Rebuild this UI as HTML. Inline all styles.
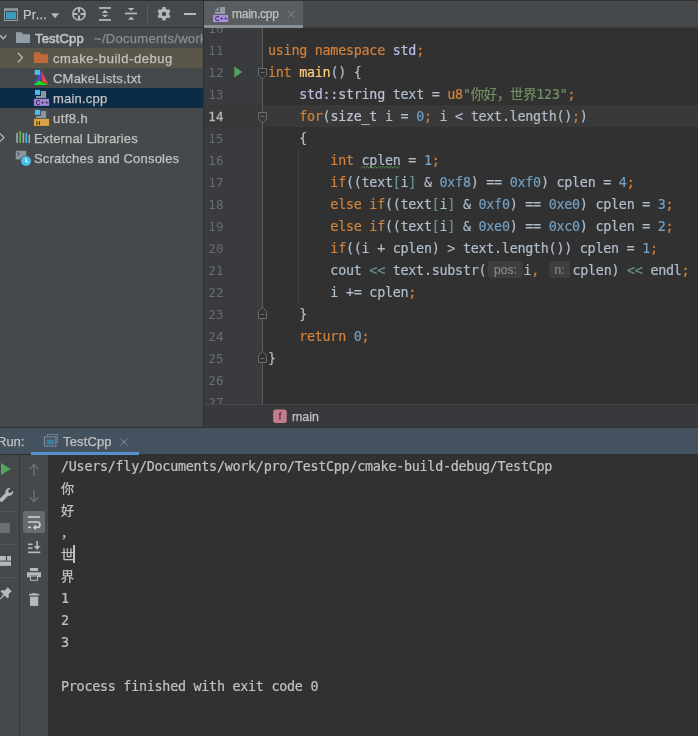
<!DOCTYPE html>
<html lang="en">
<head>
<meta charset="utf-8">
<title>TestCpp - main.cpp</title>
<style>
*{box-sizing:border-box;margin:0;padding:0}
html,body{width:698px;height:736px;overflow:hidden;background:#313131}
body{position:relative;font-family:"Liberation Sans","Noto Sans CJK SC",sans-serif;font-size:13px;color:#c1c1c1}
.abs{position:absolute}
.cl,.ln,#console div,#proj .row span,span.abs{will-change:transform}
#proj .row span,span.abs{-webkit-text-stroke:0.25px currentColor}
.cl,#console div{-webkit-text-stroke:0.2px currentColor}
/* project panel */
#proj{left:0;top:0;width:203px;height:428px;background:#45494b;overflow:hidden}
#proj .row{position:absolute;left:0;width:203px;height:20px;line-height:20px;white-space:nowrap}
#proj .row span{position:absolute;top:1px;margin-left:0.6px}
.gray{color:#8e8e8e}
/* editor */
#tabs{left:204px;top:0;width:494px;height:28px;background:#45494b;border-bottom:1px solid #3d4042}
#tab{left:0;top:1px;width:99px;height:27px;background:#585d60}
#tab .ul{left:0;top:24px;width:99px;height:3px;background:#8a9097}
#topline{left:0;top:0;width:698px;height:1px;background:#2f3032}
#vsep{left:203px;top:0;width:1px;height:428px;background:#2f3032}
#gutter{left:204px;top:28px;width:58px;height:376px;background:#393b3e}
#code{left:204px;top:28px;width:494px;height:376px;overflow:hidden;font-family:"DejaVu Sans Mono","Liberation Mono","Noto Sans CJK SC",monospace;font-size:13.4px;color:#b0bdcb}
.ln{position:absolute;left:0;width:20px;text-align:right;height:22px;line-height:22px;margin-top:1px;color:#6a6d70;font-family:"DejaVu Sans Mono","Liberation Mono",monospace;font-size:12.500px;letter-spacing:0.400px}
.cl{position:absolute;left:64.1px;margin-top:1px;height:22px;line-height:22px;white-space:pre;letter-spacing:-0.267px}
.k{color:#d1813b}.n{color:#729fc1}.s{color:#749063}.f{color:#ffcb77}.ns{color:#bbbce6}.t{color:#bfc2d5}.o{color:#699593}
.typo{}
.hint{display:inline-block;font-family:"Liberation Sans",sans-serif;font-size:12px;letter-spacing:0;color:#868686;background:#3e3e3e;border-radius:3px;height:17px;line-height:19px;text-align:center;vertical-align:0.800px}
#crumbs{left:204px;top:404px;width:494px;height:24px;background:#38393c;border-top:1px solid #47494b;border-bottom:1px solid #2f3032}
/* run */
#runhdr{left:0;top:428px;width:698px;height:27px;background:#44515f;border-bottom:1px solid #2f3032}
#runleft{left:0;top:455px;width:48px;height:281px;background:#45494b}
#console{left:48px;top:455px;width:650px;height:281px;background:#313131;font-family:"DejaVu Sans Mono","Liberation Mono","Noto Sans CJK SC",monospace;font-size:13.400px;color:#c1c1c1}
#console div{position:absolute;left:12.900px;margin-top:1px;height:22px;line-height:22px;white-space:pre;letter-spacing:-0.267px}
#console div.cj{font-size:13px;margin-left:0.300px;margin-top:0.500px;-webkit-text-stroke:0.250px currentColor}
#icons{position:absolute;left:0;top:0;width:698px;height:736px;pointer-events:none}
#icons text{font-family:"Liberation Sans",sans-serif}
</style>
</head>
<body>
<!-- PROJECT PANEL -->
<div id="proj" class="abs">
  <div class="row" style="top:4px"><span style="left:22.200px;letter-spacing:0.2px">Pr...</span></div>
  <div class="abs" style="left:0;top:27px;width:203px;height:1px;background:#2f3032"></div>
  <div class="row" style="top:28px"><span style="left:34px;-webkit-text-stroke:0.6px currentColor;letter-spacing:0.17px">TestCpp</span><span class="gray" style="left:93px;letter-spacing:0.3px">~/Documents/work/pro/TestCpp</span></div>
  <div class="row" style="top:48px;background:#5b564a"><span style="left:52px;letter-spacing:0.54px">cmake-build-debug</span></div>
  <div class="row" style="top:68px"><span style="left:52px;letter-spacing:0.21px">CMakeLists.txt</span></div>
  <div class="row" style="top:88px;background:#0a2c46"><span style="left:52px;letter-spacing:0.2px">main.cpp</span></div>
  <div class="row" style="top:108px"><span style="left:52px;letter-spacing:0.43px">utf8.h</span></div>
  <div class="row" style="top:128px"><span style="left:33px;letter-spacing:0.150px">External Libraries</span></div>
  <div class="row" style="top:148px"><span style="left:33.500px;letter-spacing:0.200px">Scratches and Consoles</span></div>
</div>
<div id="vsep" class="abs"></div>

<!-- EDITOR TABS -->
<div id="tabs" class="abs">
  <div id="tab" class="abs"><span class="abs" style="left:27.7px;top:5px;line-height:16px;font-size:12px;letter-spacing:-0.25px;color:#c1c1c1">main.cpp</span><div class="ul abs"></div></div>
</div>
<div id="topline" class="abs"></div>

<!-- EDITOR -->
<div id="gutter" class="abs"></div>
<div id="code" class="abs">
  <div class="abs" style="left:0;top:77px;width:494px;height:22px;background:#393939"></div>
  <div class="abs" style="left:58px;top:0;width:1px;height:376px;background:#5c5c5c"></div>
  <div class="abs" style="left:93.5px;top:121px;width:1px;height:154px;background:#414141"></div>
  <div class="ln" style="top:-11px">10</div>
  <div class="ln" style="top:11px">11</div>
  <div class="ln" style="top:33px">12</div>
  <div class="ln" style="top:55px">13</div>
  <div class="ln" style="top:77px;color:#b5b5b5;-webkit-text-stroke:0.300px currentColor">14</div>
  <div class="ln" style="top:99px">15</div>
  <div class="ln" style="top:121px">16</div>
  <div class="ln" style="top:143px">17</div>
  <div class="ln" style="top:165px">18</div>
  <div class="ln" style="top:187px">19</div>
  <div class="ln" style="top:209px">20</div>
  <div class="ln" style="top:231px">21</div>
  <div class="ln" style="top:253px">22</div>
  <div class="ln" style="top:275px">23</div>
  <div class="ln" style="top:297px">24</div>
  <div class="ln" style="top:319px">25</div>
  <div class="ln" style="top:341px">26</div>
  <div class="ln" style="top:363px">27</div>

  <div class="cl" style="top:11px"><span class="k">using namespace</span> <span class="ns">std</span><span class="k">;</span></div>
  <div class="cl" style="top:33px"><span class="k">int</span> <span class="f">main</span>() {</div>
  <div class="cl" style="top:55px">    <span class="ns">std</span>::<span class="t">string</span> text = <span class="k">u8</span><span class="s">"你好，世界123"</span><span class="k">;</span></div>
  <div class="cl" style="top:77px">    <span class="k">for</span>(<span class="t">size_t</span> i = <span class="n">0</span><span class="k">;</span> i &lt; text.length()<span class="k">;</span>)</div>
  <div class="cl" style="top:99px">    {</div>
  <div class="cl" style="top:121px">        <span class="k">int</span> <span class="typo">cplen</span> = <span class="n">1</span><span class="k">;</span></div>
  <div class="cl" style="top:143px">        <span class="k">if</span>((text<span class="o">[</span>i<span class="o">]</span> &amp; <span class="n">0xf8</span>) == <span class="n">0xf0</span>) cplen = <span class="n">4</span><span class="k">;</span></div>
  <div class="cl" style="top:165px">        <span class="k">else if</span>((text<span class="o">[</span>i<span class="o">]</span> &amp; <span class="n">0xf0</span>) == <span class="n">0xe0</span>) cplen = <span class="n">3</span><span class="k">;</span></div>
  <div class="cl" style="top:187px">        <span class="k">else if</span>((text<span class="o">[</span>i<span class="o">]</span> &amp; <span class="n">0xe0</span>) == <span class="n">0xc0</span>) cplen = <span class="n">2</span><span class="k">;</span></div>
  <div class="cl" style="top:209px">        <span class="k">if</span>((i + cplen) &gt; text.length()) cplen = <span class="n">1</span><span class="k">;</span></div>
  <div class="cl" style="top:231px">        cout <span class="o">&lt;&lt;</span> text.substr(<span class="hint" style="width:34.300px;margin:0 0.900px 0 2px">pos:</span>i<span class="k">,</span> <span class="hint" style="width:21.500px;margin:0 2.100px 0 2px">n:</span>cplen) <span class="o">&lt;&lt;</span> endl<span class="k">;</span></div>
  <div class="cl" style="top:253px">        i += cplen<span class="k">;</span></div>
  <div class="cl" style="top:275px">    }</div>
  <div class="cl" style="top:297px">    <span class="k">return</span> <span class="n">0</span><span class="k">;</span></div>
  <div class="cl" style="top:319px">}</div>
</div>

<!-- BREADCRUMBS -->
<div id="crumbs" class="abs">
  <span class="abs" style="left:88px;top:3.800px;line-height:16px;font-size:12.400px;color:#c1c1c1">main</span>
</div>
<div class="abs" style="left:200px;top:404px;width:3px;height:24px;background:#45494b"></div>

<div class="abs" style="left:0;top:427px;width:698px;height:1px;background:#2f3032"></div>
<!-- RUN -->
<div id="runhdr" class="abs">
  <span class="abs" style="left:-3.5px;top:6px;line-height:16px">Run:</span>
  <span class="abs" style="left:63px;top:6px;line-height:16px;letter-spacing:0.150px">TestCpp</span>
  <div class="abs" style="left:31px;top:24px;width:108px;height:3px;background:#5491cc"></div>
</div>
<div id="runleft" class="abs">
  <div class="abs" style="left:19px;top:0;width:1px;height:281px;background:#35383a"></div>
  <div class="abs" style="left:0;top:56px;width:15px;height:1px;background:#555555"></div>
  <div class="abs" style="left:0;top:89px;width:15px;height:1px;background:#555555"></div>
  <div class="abs" style="left:0;top:122px;width:15px;height:1px;background:#555555"></div>
  <div class="abs" style="left:23px;top:56px;width:22px;height:22px;border-radius:3px;background:#666b6e"></div>
</div>
<div id="console" class="abs">
  <div style="top:0px">/Users/fly/Documents/work/pro/TestCpp/cmake-build-debug/TestCpp</div>
  <div style="top:22px" class="cj">你</div>
  <div style="top:44px" class="cj">好</div>
  <div style="top:66px" class="cj">，</div>
  <div style="top:88px" class="cj">世</div>
  <div style="top:110px" class="cj">界</div>
  <div style="top:132px">1</div>
  <div style="top:154px">2</div>
  <div style="top:176px">3</div>
  <div style="top:220px">Process finished with exit code 0</div>
  <div class="abs" style="left:25.3px;top:89.3px;width:2px;height:17.7px;background:#c1c1c1"></div>
</div>
<!-- ICONS (page coordinates) -->
<svg id="icons" width="698" height="736" viewBox="0 0 698 736">
  <!-- project toolbar -->
  <g id="ic-projview">
    <rect x="4.5" y="9.5" width="13" height="11" fill="none" stroke="#8d9aa3" stroke-width="1"/>
    <rect x="4" y="8.2" width="14" height="2.6" fill="#8d9aa3"/>
    <rect x="6" y="12" width="10" height="7.2" fill="#3e9ab8"/>
  </g>
  <path d="M51 13.2h8.2l-4.1 5z" fill="#b6b8b9"/>
  <g id="ic-locate" stroke="#b6b8b9" fill="none">
    <circle cx="79" cy="13.900" r="6.100" stroke-width="1.600"/>
    <path d="M79 8v4.300M79 15.500v4.300M73 13.900h4.400M80.600 13.900h4.400" stroke-width="2"/>
  </g>
  <g id="ic-expand" fill="#b6b8b9">
    <rect x="99" y="7.100" width="12" height="1.750"/>
    <rect x="99" y="19.100" width="12" height="1.750"/>
    <path d="M105 10.100l3.300 2.800h-6.600z"/>
    <path d="M105 17.600l3.300-2.800h-6.600z"/>
  </g>
  <g id="ic-collapse" fill="#b6b8b9">
    <rect x="125" y="12.600" width="12" height="1.700"/>
    <path d="M131.100 11.100l3.100-3.100h-6.200z"/>
    <path d="M131.100 16.600l3.100 3.100h-6.200z"/>
  </g>
  <rect x="147" y="4" width="1" height="19" fill="#5a5d5f"/>
  <g id="ic-gear" transform="translate(164 13.9)" fill="#b6b8b9">
    <path fill-rule="evenodd" d="M-1.4-6.8h2.8l.5 1.9 1.3.75 1.9-.55 1.4 2.4-1.4 1.4v1.5l1.4 1.4-1.4 2.4-1.9-.55-1.3.75-.5 1.9h-2.8l-.5-1.9-1.3-.75-1.9.55-1.4-2.4 1.4-1.4v-1.5l-1.4-1.4 1.4-2.4 1.9.55 1.3-.75zM0-2.2a2.2 2.2 0 1 0 0 4.4 2.2 2.2 0 0 0 0-4.400z"/>
  </g>
  <rect x="184" y="13" width="12" height="2" fill="#b6b8b9"/>

  <!-- tree -->
  <path d="M0 35.3l3.2 3.5 3.2-3.5" fill="none" stroke="#b6b8b9" stroke-width="1.3"/>
  <path d="M16 32.3h5.6l1.6 1.9H30V43H16z" fill="#919da6"/>
  <path d="M18 53l4.4 4.6-4.400 4.600" fill="none" stroke="#b6b8b9" stroke-width="1.3"/>
  <path d="M34 52.300h5.600l1.600 1.900H48V63H34z" fill="#c0693a"/>
  <g id="ic-cmake">
    <path d="M41.200 70.800L33.700 84.800L38.800 80.600L41.900 78.000z" fill="#4a4ad8"/>
    <path d="M41.300 70.800L48.300 84.600L42.000 81.200L41.800 75.000z" fill="#e8494d"/>
    <path d="M33.700 84.900H48.200L38.800 80.500z" fill="#18e018"/>
    <rect x="34.800" y="69.900" width="5.300" height="5" fill="#48bee8"/>
  </g>
  <g id="ic-cpp">
    <path d="M41 91h5.100v6.900H36v-1.800h5z" fill="#8796a0"/>
    <rect x="34.900" y="89.900" width="5.200" height="5" fill="#48bee8"/>
    <rect x="33.900" y="98.800" width="15.200" height="7.100" fill="#9c85d2"/>
    <text x="35.800" y="104.700" font-size="6.300" font-weight="bold" fill="#3c2850">C<tspan dx="0.500" dy="-0.500" font-size="6">+</tspan><tspan dx="0.500" font-size="6">+</tspan></text>
  </g>
  <g id="ic-h">
    <path d="M41 111h5.100v6.900H36v-1.800h5z" fill="#8796a0"/>
    <rect x="34.900" y="109.900" width="5.200" height="5" fill="#48bee8"/>
    <rect x="33.900" y="118.800" width="15.200" height="7.100" fill="#d9a343"/>
    <text x="35.900" y="124.800" font-size="6" font-weight="bold" fill="#3f2d0c">H</text>
  </g>
  <path d="M0 133.600l4 4-4 4" fill="none" stroke="#b6b8b9" stroke-width="1.300"/>
  <g id="ic-libs">
    <rect x="16.200" y="132.900" width="1.700" height="10" fill="#9aa7b0"/>
    <rect x="19.300" y="131" width="1.700" height="11.900" fill="#62b543"/>
    <rect x="22.500" y="132.900" width="1.700" height="10" fill="#9aa7b0"/>
    <rect x="25.400" y="132.900" width="1.700" height="10" fill="#40b6e0"/>
    <rect x="28.400" y="134.700" width="1.700" height="8.200" fill="#9aa7b0"/>
  </g>
  <g id="ic-scratch">
    <rect x="15.800" y="150.800" width="10.400" height="8.600" fill="#8d979e"/>
    <path d="M17.300 152.300l2.200 1.800-2.200 1.800" fill="none" stroke="#45494b" stroke-width="1"/>
    <circle cx="26" cy="161" r="5.600" fill="#45494b"/>
    <circle cx="26" cy="161" r="5" fill="#48bee8"/>
    <path d="M26 158v3.200l2 1.200" fill="none" stroke="#ffffff" stroke-width="1.100"/>
  </g>

  <!-- editor tab -->
  <g id="ic-tabcpp">
    <path d="M220 7.100h5.100v6.800H214.800v-2.200H220z" fill="#909da6"/>
    <path d="M218.700 7.100v3.300H214.800z" fill="#909da6"/>
    <rect x="213" y="15" width="15.100" height="7" fill="#a98fdc"/>
    <text x="214.900" y="20.900" font-size="6.300" font-weight="bold" fill="#3c2850">C<tspan dx="0.500" dy="-0.500" font-size="6">+</tspan><tspan dx="0.500" font-size="6">+</tspan></text>
  </g>
  <path d="M287.800 10.800l7 7M294.800 10.800l-7 7" stroke="#808487" stroke-width="1" fill="none"/>

  <!-- gutter -->
  <path d="M234.400 66.600l7.800 5.400-7.800 5.400z" fill="#53a45e"/>
  <g id="folds" fill="#313131" stroke="#6a6d70" stroke-width="1">
    <path d="M258.500 68.500h8v6.500l-4 4-4-4z"/>
    <path d="M260.500 72.500h4"/>
    <path d="M258.500 112.500h8v6.500l-4 4-4-4z" fill="#393939"/>
    <path d="M260.500 116.500h4"/>
    <path d="M258.500 318.500h8v-7l-4-4.200-4 4.200z"/>
    <path d="M260.500 314.500h4"/>
    <path d="M258.500 362.500h8v-7l-4-4.200-4 4.200z"/>
    <path d="M260.500 358.500h4"/>
  </g>

  <path d="M361.2 168.4L363.2 166.2L365.2 168.4L367.2 166.2L369.2 168.4L371.2 166.2L373.2 168.4L375.2 166.2L377.2 168.4L379.2 166.2L381.2 168.4L383.2 166.2L385.2 168.4L387.2 166.2L389.2 168.4L391.2 166.2L393.2 168.4L395.2 166.2L397.2 168.4L399.2 166.2" fill="none" stroke="#5c9457" stroke-width="0.9"/>

  <!-- breadcrumb -->
  <rect x="273.200" y="409.500" width="13.600" height="13.600" rx="2.500" fill="#c27d8e"/>
  <text x="280" y="420.300" font-size="11" text-anchor="middle" fill="#4a2a33">f</text>

  <!-- run header -->
  <g id="ic-runtab">
    <rect x="47.500" y="434.500" width="10" height="8" fill="none" stroke="#717d88" stroke-width="1"/>
    <rect x="44.500" y="436.900" width="11.400" height="9.200" fill="#44515f" stroke="#828e98" stroke-width="1"/>
    <rect x="46.500" y="439.500" width="7.800" height="5" fill="#3a7d9c"/>
  </g>
  <path d="M120.400 438.400l7.300 7.300M127.700 438.400l-7.300 7.300" stroke="#7f8993" stroke-width="1" fill="none"/>

  <!-- run left toolbar col 1 -->
  <path d="M1 462.900l9.800 6.100-9.800 6.100z" fill="#53a45e"/>
  <g id="ic-wrench" fill="#b6b8b9">
    <path d="M-1 499.500l6.500-6.500a4 4 0 0 1 5-4.800l-2.400 2.400 .5 2 2 .5 2.400-2.400a4 4 0 0 1-4.800 5l-6.700 6.700z"/>
  </g>
  <rect x="0" y="523" width="9.800" height="10" fill="#6e6e6e"/>
  <g id="ic-layout" fill="#b6b8b9">
    <rect x="0" y="556" width="5.900" height="4.600"/>
    <rect x="7.100" y="556" width="3.900" height="4.600"/>
    <rect x="0" y="561.600" width="11" height="4.300"/>
  </g>
  <g id="ic-pin" fill="#b6b8b9">
    <path d="M7.500 587l4.500 4.500-1.500.5-2 2.500.3 2.800-1.300 1-2.900-2.900-4.600 4.400v-1.200l3.400-4.400-2.800-2.800 1-1.300 2.800.3 2.500-2z"/>
  </g>

  <!-- run left toolbar col 2 -->
  <g stroke="#6e6e6e" stroke-width="1.400" fill="none">
    <path d="M34 476v-11.500M29.600 469l4.400-4.600 4.400 4.600"/>
    <path d="M34 489.800v11.500M29.600 497l4.400 4.600 4.400-4.600"/>
  </g>
  <g id="ic-wrap" stroke="#d0d2d4" stroke-width="1.600" fill="none">
    <path d="M28 517h12"/>
    <path d="M28 522h9.300a2.700 2.700 0 0 1 0 5.400h-3"/>
    <path d="M28 527.400h3"/>
    <path d="M36 524.600l-3 2.800 3 2.800z" fill="#d0d2d4" stroke="none"/>
  </g>
  <g id="ic-scrollend" fill="#b6b8b9">
    <rect x="28" y="543.500" width="4.500" height="1.600"/>
    <rect x="28" y="547.400" width="4.500" height="1.600"/>
    <rect x="28" y="551.500" width="12.300" height="1.700"/>
    <rect x="36.300" y="541" width="1.600" height="6"/>
    <path d="M33.600 546h7l-3.500 4z"/>
  </g>
  <g id="ic-print" fill="#b6b8b9">
    <rect x="30" y="568" width="8" height="3"/>
    <path d="M27 572.200h14v5h-3v-2h-8v2h-3z"/>
    <rect x="30.500" y="576" width="7" height="4.300" fill="none" stroke="#b6b8b9" stroke-width="1"/>
  </g>
  <g id="ic-trash" fill="#b6b8b9">
    <path d="M32.500 593h3.200v.8h3.500v1.800h-10.200v-1.800h3.500z"/>
    <path d="M30 596.600h8.200v9.300h-8.200z"/>
  </g>
</svg>
</body>
</html>
